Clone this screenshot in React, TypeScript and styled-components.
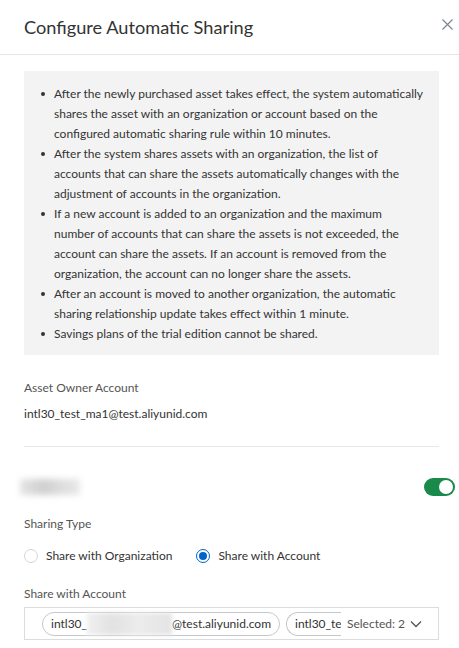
import React from "react";
import styled, { createGlobalStyle } from "styled-components";

const Global = createGlobalStyle`
  html, body { margin: 0; padding: 0; background: #fff; }
  body { font-family: Lato, "Noto Sans", Arial, sans-serif; color: #333; }
  * { box-sizing: border-box; }
`;

const Dialog = styled.div`
  width: 459px;
  height: 648px;
  overflow: hidden;
  background: #fff;
`;

const Header = styled.div`
  height: 55px;
  display: flex;
  align-items: center;
  justify-content: space-between;
  padding: 0 0 0 24px;
  border-bottom: 1px solid #e6e6e6;
`;

const Title = styled.h1`
  margin: 0;
  font-size: 18.2px;
  font-weight: 400;
  color: #333;
  line-height: 28px;
`;

const CloseBtn = styled.button`
  border: 0;
  background: none;
  padding: 0;
  width: 24px;
  height: 24px;
  display: flex;
  align-items: center;
  justify-content: center;
  margin-top: -6px;
  cursor: pointer;
`;

const Body = styled.div`
  padding: 16px 20px 0 24px;
`;

const Notice = styled.ul`
  margin: 0;
  list-style: none;
  background: #f3f3f3;
  padding: 13px 16px 11px 17px;
`;

const Item = styled.li`
  display: flex;
  font-size: 12px;
  line-height: 20px;
  color: #333;
`;

const Dot = styled.span`
  flex: 0 0 13px;
  display: flex;
  align-items: flex-start;
  padding-top: 8px;
  &::before {
    content: "";
    width: 4px;
    height: 4px;
    border-radius: 50%;
    background: #333;
  }
`;

const Field = styled.div<{ $mt?: number; $gap?: number }>`
  margin-top: ${(p) => p.$mt ?? 0}px;
  display: flex;
  flex-direction: column;
  gap: ${(p) => p.$gap ?? 6}px;
`;

const Label = styled.div`
  font-size: 12px;
  line-height: 20px;
  color: #555;
`;

const Value = styled.div`
  font-size: 12px;
  line-height: 20px;
  color: #333;
`;

const Divider = styled.hr`
  margin: 22px 0 0;
  border: 0;
  border-top: 1px solid #e8e8e8;
`;

const ToggleRow = styled.div`
  margin: 30px -16px 0 -4px;
  height: 20px;
  display: flex;
  align-items: center;
  justify-content: space-between;
`;

const Redacted = styled.span<{ $w: number }>`
  display: inline-block;
  width: ${(p) => p.$w}px;
  height: 16px;
  background: linear-gradient(90deg, #e4e4e4, #cfcfcf 40%, #dedede 70%, #e8e8e8);
  filter: blur(3px);
`;

const Switch = styled.span`
  width: 31px;
  height: 18px;
  border-radius: 9px;
  background: #1a8a4a;
  display: flex;
  align-items: center;
  justify-content: flex-end;
  padding: 2px;
  &::after {
    content: "";
    width: 14px;
    height: 14px;
    border-radius: 50%;
    background: #fff;
  }
`;

const RadioGroup = styled.div`
  display: flex;
  align-items: center;
  gap: 24px;
  height: 20px;
`;

const RadioOption = styled.label`
  display: flex;
  align-items: center;
  gap: 8px;
  font-size: 12px;
  color: #333;
  line-height: 20px;
`;

const RadioCircle = styled.span<{ $checked?: boolean }>`
  width: 14px;
  height: 14px;
  border-radius: 50%;
  border: 1px solid ${(p) => (p.$checked ? "#0064c8" : "#d6d6d6")};
  background: #fff;
  display: flex;
  align-items: center;
  justify-content: center;
  &::after {
    content: "";
    display: ${(p) => (p.$checked ? "block" : "none")};
    width: 8px;
    height: 8px;
    border-radius: 50%;
    background: #0064c8;
  }
`;

const Select = styled.div`
  height: 33px;
  border: 1px solid #dcdcdc;
  display: flex;
  align-items: center;
  gap: 6px;
  padding: 0 16px 0 17px;
  overflow: hidden;
  white-space: nowrap;
`;

const Tag = styled.span`
  flex: 0 0 auto;
  height: 24px;
  border: 1px solid #c4c8cc;
  border-radius: 12px;
  display: flex;
  align-items: center;
  padding: 0 8px;
  font-size: 12px;
  color: #333;
`;

const ClippedTag = styled.span`
  flex: 1 1 0;
  min-width: 0;
  height: 24px;
  overflow: hidden;
  display: flex;
  border: 1px solid #c4c8cc;
  border-right: 0;
  border-radius: 12px 0 0 12px;
  align-items: center;
  padding-left: 8px;
  font-size: 12px;
  color: #333;
`;

const TagBlur = styled.span`
  display: inline-block;
  width: 85px;
  height: 22px;
  background: linear-gradient(90deg, #f0f0f0, #e2e2e2 30%, #ececec 60%, #e4e4e4);
  filter: blur(2px);
`;

const Summary = styled.span`
  flex: 0 0 auto;
  display: flex;
  align-items: center;
  gap: 5px;
  font-size: 12px;
  color: #555;
`;

const notices = [
  "After the newly purchased asset takes effect, the system automatically shares the asset with an organization or account based on the configured automatic sharing rule within 10 minutes.",
  "After the system shares assets with an organization, the list of accounts that can share the assets automatically changes with the adjustment of accounts in the organization.",
  "If a new account is added to an organization and the maximum number of accounts that can share the assets is not exceeded, the account can share the assets. If an account is removed from the organization, the account can no longer share the assets.",
  "After an account is moved to another organization, the automatic sharing relationship update takes effect within 1 minute.",
  "Savings plans of the trial edition cannot be shared.",
];

export default function App() {
  return (
    <>
      <Global />
      <Dialog>
        <Header>
          <Title>Configure Automatic Sharing</Title>
          <CloseBtn aria-label="Close">
            <svg width="11" height="11" viewBox="0 0 11 11">
              <path d="M0.5 0.5L10.5 10.5M10.5 0.5L0.5 10.5" stroke="#7d8591" strokeWidth="1.2" fill="none" />
            </svg>
          </CloseBtn>
        </Header>
        <Body>
          <Notice>
            {notices.map((n) => (
              <Item key={n}>
                <Dot />
                <span>{n}</span>
              </Item>
            ))}
          </Notice>
          <Field $mt={23}>
            <Label>Asset Owner Account</Label>
            <Value>intl30_test_ma1@test.aliyunid.com</Value>
          </Field>
          <Divider />
          <ToggleRow>
            <Redacted $w={60} />
            <Switch />
          </ToggleRow>
          <Field $mt={17} $gap={12}>
            <Label>Sharing Type</Label>
            <RadioGroup>
              <RadioOption>
                <RadioCircle />
                Share with Organization
              </RadioOption>
              <RadioOption>
                <RadioCircle $checked />
                Share with Account
              </RadioOption>
            </RadioGroup>
          </Field>
          <Field $mt={18} $gap={3}>
            <Label>Share with Account</Label>
            <Select>
              <Tag>
                intl30_
                <TagBlur />
                @test.aliyunid.com
              </Tag>
              <ClippedTag>intl30_tes</ClippedTag>
              <Summary>
                Selected: 2
                <svg width="12" height="8" viewBox="0 0 12 8">
                  <path d="M1 1.5L6 6.5L11 1.5" stroke="#555" strokeWidth="1.3" fill="none" />
                </svg>
              </Summary>
            </Select>
          </Field>
        </Body>
      </Dialog>
    </>
  );
}
